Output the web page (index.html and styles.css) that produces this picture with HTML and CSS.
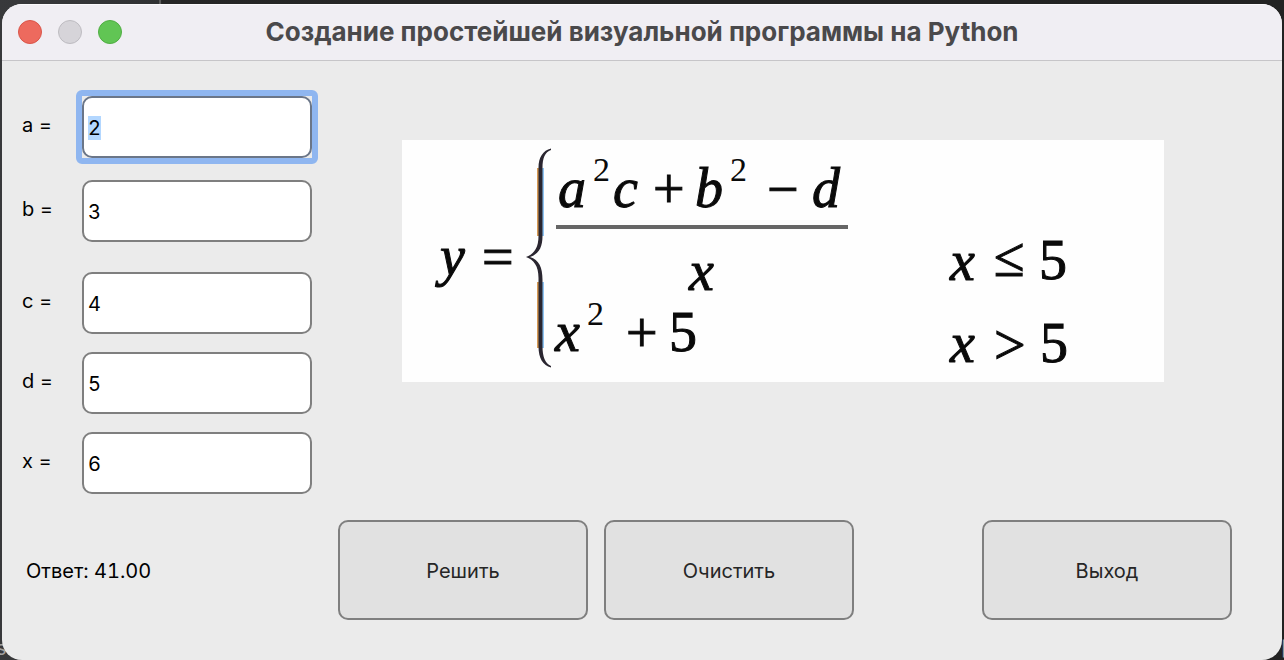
FILE: index.html
```html
<!DOCTYPE html>
<html lang="ru">
<head>
<meta charset="utf-8">
<meta name="viewport" content="width=device-width, initial-scale=1">
<title>Создание простейшей визуальной программы на Python</title>
<link rel="stylesheet" href="styles.css">
</head>
<body class="desktop">
<span class="behind behind-left" aria-hidden="true">s</span>
<span class="behind behind-right" aria-hidden="true">[</span>
<span class="tab-line" aria-hidden="true"></span>
<main class="window">
  <header class="titlebar">
    <div class="lights">
      <button class="light light-close" type="button" aria-label="Закрыть"></button>
      <button class="light light-min" type="button" aria-label="Свернуть" disabled></button>
      <button class="light light-zoom" type="button" aria-label="Развернуть"></button>
    </div>
    <h1 class="title">Создание простейшей визуальной программы на Python</h1>
  </header>
  <form class="content">
    <div class="upper">
      <div class="fields">
        <div class="field"><label class="label" for="a">a =</label><span class="ring"><input class="entry" id="a" type="text" value="2" autocomplete="off" autofocus></span></div>
        <div class="field"><label class="label" for="b">b =</label><span class="ring"><input class="entry" id="b" type="text" value="3" autocomplete="off"></span></div>
        <div class="field field-apart"><label class="label" for="c">c =</label><span class="ring"><input class="entry" id="c" type="text" value="4" autocomplete="off"></span></div>
        <div class="field"><label class="label" for="d">d =</label><span class="ring"><input class="entry" id="d" type="text" value="5" autocomplete="off"></span></div>
        <div class="field"><label class="label" for="x">x =</label><span class="ring"><input class="entry" id="x" type="text" value="6" autocomplete="off"></span></div>
      </div>
      <svg class="formula" viewBox="0 0 762 242" role="img" aria-label="Формула для y">
        <g class="math">
          <text class="var" x="38" y="135">y</text>
          <text x="80" y="136">=</text>
          <text class="var" x="156" y="67">a</text>
          <text class="sup" x="191" y="41">2</text>
          <text class="var" x="211" y="67">c</text>
          <text x="251" y="68">+</text>
          <text class="var" x="293" y="67">b</text>
          <text class="sup" x="328" y="41">2</text>
          <text x="365" y="68">−</text>
          <text class="var" x="410" y="67">d</text>
          <text class="var" x="287" y="150">x</text>
          <text class="var" x="153" y="211">x</text>
          <text class="sup" x="185" y="185">2</text>
          <text x="224" y="212">+</text>
          <text x="267" y="211">5</text>
          <text class="var" x="548" y="140">x</text>
          <text x="592" y="136">≤</text>
          <text x="637" y="139">5</text>
          <text class="var" x="548" y="222">x</text>
          <text x="592" y="224">&gt;</text>
          <text x="638" y="222">5</text>
        </g>
        <path class="bar" d="M154 87H446"/>
        <path class="fringe-warm" d="M136 28V96M136 142V208"/>
        <path class="fringe-cool" d="M141 28V96M141 142V208"/>
        <path class="brace" d="M149 8.500C141 10.500 136.500 17 136.500 28V96C136.500 108 132 114 124 117C132 120 136.500 126 136.500 138V206C136.500 219 141 225 149 227.500V226C143 223 140.500 217 140.500 206V140C140.500 127 137 120 128 117C137 114 140.500 107 140.500 96V28C140.500 18 143 12 149 10Z"/>
      </svg>
    </div>
    <div class="actions">
      <output class="answer" for="a b c d x">Ответ: 41.00</output>
      <button class="btn" type="button">Решить</button>
      <button class="btn" type="button">Очистить</button>
      <button class="btn btn-exit" type="button">Выход</button>
    </div>
  </form>
</main>
<script src="script.js"></script>
</body>
</html>
```

FILE: styles.css
```css
* {
  box-sizing: border-box;
}

.desktop {
  margin: 0;
  min-height: 100vh;
  padding: 4px 2px 0;
  display: flex;
  position: relative;
  overflow: hidden;
  background: linear-gradient(90deg, #38393b 0, #303133 160px, #262626 162px, #222222 100%);
  font-family: Inter, "Liberation Sans", sans-serif;
  font-size: 20px;
  line-height: 24px;
  color: #000000;
}

.behind {
  position: absolute;
  bottom: 0;
  color: #a0a0a0;
}

.behind-left {
  left: -4px;
}

.behind-right {
  right: -4px;
}

.tab-line {
  position: absolute;
  top: 0;
  left: 159px;
  width: 2px;
  height: 4px;
  background: #5a5a5a;
}

.window {
  flex: 1;
  display: flex;
  flex-direction: column;
  position: relative;
  overflow: hidden;
  border-radius: 20px;
  background: #ebebeb;
}

.titlebar {
  display: grid;
  grid-template-columns: 1fr auto 1fr;
  align-items: center;
  padding: 0 16px 2px;
  height: 57px;
  background: #f0eef3;
  border-top: 1px solid #fbfafc;
  border-bottom: 1px solid #c6c5c8;
}

.lights {
  display: flex;
  gap: 16px;
}

.light {
  width: 24px;
  height: 24px;
  padding: 0;
  border: 1px solid;
  border-radius: 50%;
}

.light-close {
  background: #ed6a5e;
  border-color: #d95549;
}

.light-min {
  background: #d6d4d9;
  border-color: #bdbbc0;
}

.light-zoom {
  background: #61c554;
  border-color: #50ad43;
}

.title {
  margin: 0;
  font-size: 26px;
  line-height: 32px;
  font-weight: 700;
  color: #4a494b;
}

.content {
  flex: 1;
  display: flex;
  flex-direction: column;
  gap: 26px;
  padding: 35px 50px 40px 20px;
}

.upper {
  display: flex;
  align-items: flex-start;
  gap: 90px;
  padding-right: 68px;
}

.fields {
  display: flex;
  flex-direction: column;
  gap: 18px;
}

.field {
  display: grid;
  grid-template-columns: 60px 230px;
  align-items: center;
}

.field:first-child {
  margin-bottom: 4px;
}

.field-apart {
  margin-top: 12px;
}

.label {
  padding-bottom: 4px;
}

.ring {
  display: flex;
  margin: -6px;
  border: 6px solid transparent;
  border-radius: 6px;
}

.ring:focus-within {
  border-color: #8fb6f0;
}

.entry {
  width: 100%;
  height: 62px;
  padding: 2px 4px 0;
  border: 2px solid #7f7f7f;
  border-radius: 10px;
  outline: 0;
  background: #ffffff;
  font: inherit;
  font-variant-numeric: tabular-nums;
  color: inherit;
}

.entry:focus {
  border-color: #6b7688;
}

.entry::selection {
  background: #b3d7ff;
  color: #000000;
}

.formula {
  flex: 1;
  min-width: 0;
  margin-top: 44px;
  background: #fefefe;
}

.math {
  font-family: "Liberation Serif", serif;
  font-size: 56px;
  fill: #0a0a0a;
  stroke: #0a0a0a;
  stroke-width: 1px;
}

.var {
  font-style: italic;
}

.sup {
  font-size: 34px;
  stroke: none;
}

.bar {
  stroke: #666666;
  stroke-width: 4px;
}

.brace {
  fill: #2a2630;
}

.fringe-warm {
  stroke: #d69a55;
  stroke-width: 2px;
}

.fringe-cool {
  stroke: #8fc4f2;
  stroke-width: 2px;
}

.actions {
  display: flex;
  align-items: center;
  gap: 16px;
}

.answer {
  width: 300px;
  padding: 2px 0 0 4px;
  font-variant-numeric: tabular-nums;
}

.btn {
  width: 250px;
  height: 100px;
  padding: 2px 0 0;
  border: 2px solid #7f7f7f;
  border-radius: 10px;
  background: #e1e1e1;
  font: inherit;
  color: #262626;
}

.btn-exit {
  margin-left: auto;
}
```

FILE: script.js
```js
const first = document.getElementById("a");
first.focus();
first.select();
```
